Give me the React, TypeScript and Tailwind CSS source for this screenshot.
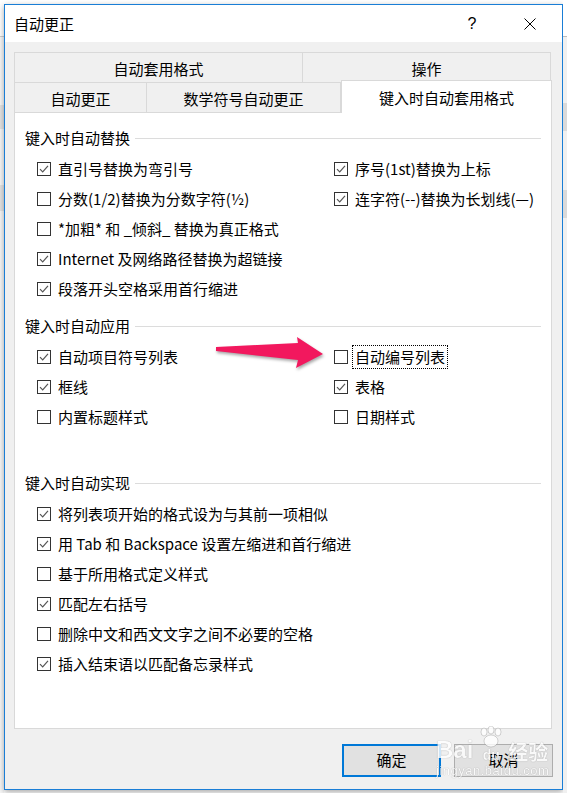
import React from 'react';

const font = "font-['Noto_Sans_CJK_SC',sans-serif]";

interface OptionProps {
  label: string;
  checked?: boolean;
  focus?: boolean;
}

function Option({ label, checked, focus }: OptionProps) {
  return (
    <div className="flex h-[30px] items-center">
      <span className="flex h-[14px] w-[14px] shrink-0 items-center justify-center border border-[#333333] bg-white">
        {checked && (
          <svg width="12" height="12" viewBox="0 0 12 12">
            <path d="M2 6.2 L4.7 8.9 L10 2.9" fill="none" stroke="#555555" strokeWidth="1.2" />
          </svg>
        )}
      </span>
      {focus ? (
        <span className="ml-[4px] border border-dotted border-black px-[2px] py-[2px] leading-[18px]">{label}</span>
      ) : (
        <span className="ml-[7px] leading-[18px] whitespace-nowrap">{label}</span>
      )}
    </div>
  );
}

function Heading({ title }: { title: string }) {
  return (
    <div className="flex h-[20px] items-center px-[10px]">
      <span className="whitespace-nowrap">{title}</span>
      <div className="ml-[5px] h-px flex-1 bg-[#dcdcdc]" />
    </div>
  );
}

function Arrow() {
  return (
    <svg
      className="pointer-events-none absolute left-[210px] top-[330px]"
      width="120"
      height="46"
      viewBox="0 0 120 46"
      style={{ filter: 'drop-shadow(1px 2px 1.5px rgba(0,0,0,0.35))' }}
    >
      <polygon points="6,17 88,13 87,7 113,24 86,38 88,30 6,21" fill="#f2185e" />
    </svg>
  );
}

function Watermark() {
  return (
    <div
      className="pointer-events-none absolute left-[436px] top-[726px] flex flex-col text-white opacity-80"
      style={{ textShadow: '0 0 1px rgba(0,0,0,0.45)' }}
    >
      <div className="flex items-end">
        <span className="font-['Liberation_Sans',sans-serif] text-[24px] font-bold leading-none">Bai</span>
        <div className="ml-[3px] flex flex-col items-center">
          <svg width="30" height="22" viewBox="0 0 30 22">
            <g fill="white" stroke="rgba(0,0,0,0.25)" strokeWidth="0.8">
              <ellipse cx="8" cy="6" rx="3" ry="4" />
              <ellipse cx="15" cy="4" rx="3" ry="4" />
              <ellipse cx="22" cy="6" rx="3" ry="4" />
              <ellipse cx="15" cy="15" rx="7" ry="6" />
            </g>
          </svg>
          <span className="font-['Liberation_Sans',sans-serif] text-[14px] font-bold leading-none">du</span>
        </div>
        <span className={`${font} ml-[2px] text-[20px] font-bold leading-none`}>经验</span>
      </div>
      <span className="mt-[2px] font-['Liberation_Sans',sans-serif] text-[13px] leading-none tracking-[0.5px]">
        jingyan.baidu.com
      </span>
    </div>
  );
}

export default function App() {
  return (
    <div className={`${font} relative flex h-[793px] w-[567px] overflow-hidden bg-white text-[15px] text-black`}>
      {/* background window on the left */}
      <div className="flex w-[4px] flex-col bg-[#f7f7f7]">
        <div className="h-[36px] bg-white" />
        <div className="h-px bg-[#cfcfcf]" />
        <div className="h-[68px]" />
        <div className="h-[24px] bg-[#e3e3e3]" />
        <div className="h-[56px]" />
        <div className="h-[26px] bg-[#e3e3e3]" />
        <div className="flex-1" />
      </div>

      {/* dialog */}
      <div className="mt-[4px] flex h-[786px] w-[559px] flex-col border border-[#1a7ed6] bg-[#f0f0f0] shadow-[0_2px_6px_rgba(0,0,0,0.35)]">
        <div className="flex h-[37px] items-center bg-white pl-[9px]">
          <span className="flex-1 pt-[1px]">自动更正</span>
          <span className="w-[14px] text-center font-['Liberation_Sans',sans-serif] text-[16px]">?</span>
          <svg className="ml-[45px] mr-[26px]" width="12" height="12" viewBox="0 0 12 12">
            <path d="M0.5 0.5 L11.5 11.5 M11.5 0.5 L0.5 11.5" stroke="#000" strokeWidth="1" />
          </svg>
        </div>

        <div className="flex flex-1 flex-col px-[9px]">
          {/* tabs */}
          <div className="mt-[10px] flex h-[30px] w-[537px]">
            <div className="flex w-[289px] items-center justify-center border-x border-t border-[#d9d9d9] pt-[3px]">
              自动套用格式
            </div>
            <div className="flex flex-1 items-center justify-center border-r border-t border-[#d9d9d9] pt-[3px]">
              操作
            </div>
          </div>
          <div className="relative z-10 flex h-[30px] w-[538px]">
            <div className="flex w-[133px] items-center justify-center border-x border-t border-[#d9d9d9] pt-[3px]">
              自动更正
            </div>
            <div className="flex w-[194px] items-center justify-center border-r border-t border-[#d9d9d9] pt-[3px]">
              数学符号自动更正
            </div>
            <div className="-mt-[2px] flex h-[33px] flex-1 items-center justify-center border-x border-t border-[#d9d9d9] bg-white pt-[2px]">
              键入时自动套用格式
            </div>
          </div>

          {/* panel */}
          <div className="h-[617px] w-[538px] border border-[#d9d9d9] bg-white pt-[15px]">
            <Heading title="键入时自动替换" />
            <div className="mt-[6px] grid grid-cols-[297px_1fr] pl-[22px]">
              <Option checked label="直引号替换为弯引号" />
              <Option checked label="序号(1st)替换为上标" />
              <Option label="分数(1/2)替换为分数字符(½)" />
              <Option checked label="连字符(--)替换为长划线(—)" />
              <Option label="*加粗* 和 _倾斜_ 替换为真正格式" />
              <div />
              <Option checked label="Internet 及网络路径替换为超链接" />
              <div />
              <Option checked label="段落开头空格采用首行缩进" />
              <div />
            </div>

            <div className="mt-[12px]">
              <Heading title="键入时自动应用" />
            </div>
            <div className="mt-[6px] grid grid-cols-[297px_1fr] pl-[22px]">
              <Option checked label="自动项目符号列表" />
              <Option focus label="自动编号列表" />
              <Option checked label="框线" />
              <Option checked label="表格" />
              <Option label="内置标题样式" />
              <Option label="日期样式" />
            </div>

            <div className="mt-[41px]">
              <Heading title="键入时自动实现" />
            </div>
            <div className="mt-[6px] flex flex-col pl-[22px]">
              <Option checked label="将列表项开始的格式设为与其前一项相似" />
              <Option checked label="用 Tab 和 Backspace 设置左缩进和首行缩进" />
              <Option label="基于所用格式定义样式" />
              <Option checked label="匹配左右括号" />
              <Option label="删除中文和西文文字之间不必要的空格" />
              <Option checked label="插入结束语以匹配备忘录样式" />
            </div>
          </div>

          {/* buttons */}
          <div className="mt-[15px] flex justify-end gap-[13px]">
            <button className="flex h-[33px] w-[99px] items-center justify-center border-2 border-[#0078d7] bg-[#e1e1e1]">
              确定
            </button>
            <button className="flex h-[33px] w-[99px] items-center justify-center border border-[#adadad] bg-[#e1e1e1]">
              取消
            </button>
          </div>
        </div>
      </div>

      {/* background window on the right */}
      <div className="flex flex-1 flex-col bg-[#f0f0f0]">
        <div className="h-[36px] bg-white" />
        <div className="h-px bg-[#bdbdbd]" />
        <div className="h-[66px]" />
        <div className="h-[28px] bg-[#dadada]" />
        <div className="h-[59px]" />
        <div className="h-[28px] bg-[#dadada]" />
        <div className="flex-1" />
      </div>

      <Arrow />
      <Watermark />
    </div>
  );
}
